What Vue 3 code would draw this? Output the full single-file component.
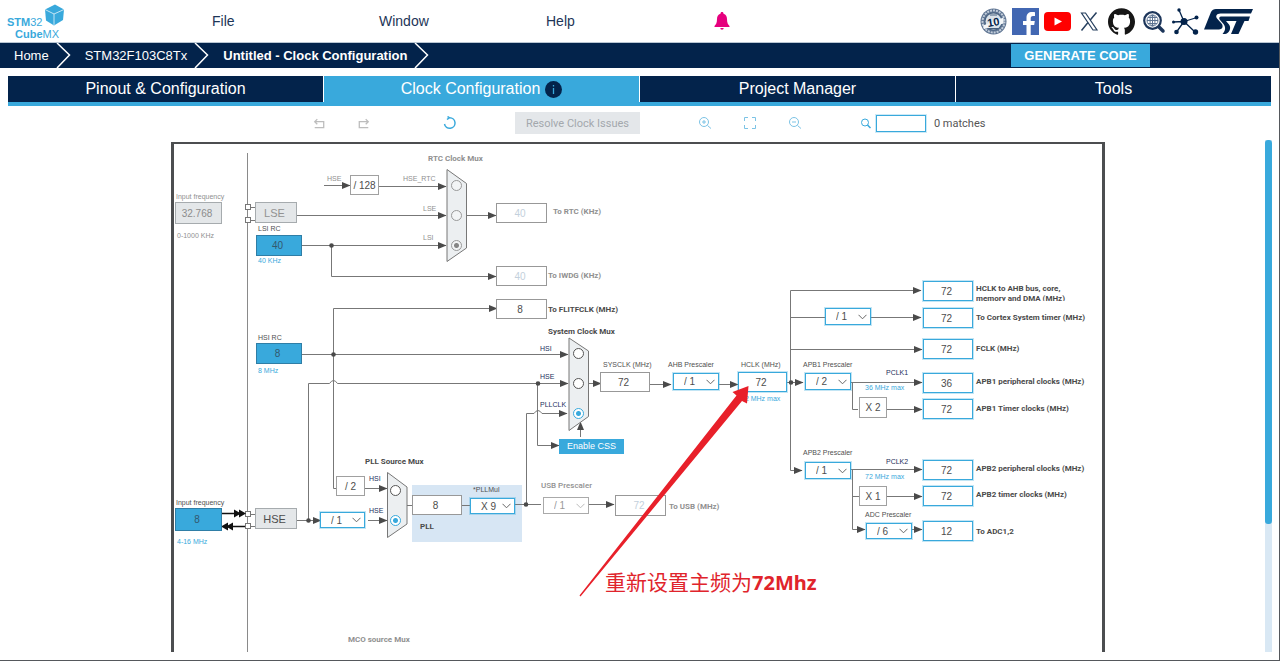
<script setup>
import { ref } from 'vue'

// Coordinates of the clock tree share one space; the canvas starts at this origin.
const origin = { x: 174, y: 144 }

const place = (n) => ({
  left: n.x - origin.x + 'px',
  top: n.y - origin.y + 'px',
  width: n.w ? n.w + 'px' : undefined,
  height: n.h ? n.h + 'px' : undefined,
})

const tabs = ref([
  { name: 'Pinout & Configuration', active: false },
  { name: 'Clock Configuration', active: true },
  { name: 'Project Manager', active: false },
  { name: 'Tools', active: false },
])

const fields = ref([
  { id: 'lse-in', label: 'LSE input frequency', value: '32.768', x: 175, y: 202, w: 47, h: 22, kind: 'off' },
  { id: 'lsi', label: 'LSI RC', value: '40', x: 256, y: 235, w: 46, h: 21, kind: 'source' },
  { id: 'hsi', label: 'HSI RC', value: '8', x: 256, y: 343, w: 46, h: 21, kind: 'source' },
  { id: 'hse-in', label: 'HSE input frequency', value: '8', x: 175, y: 508, w: 47, h: 23, kind: 'source' },
  { id: 'rtc', label: 'To RTC (KHz)', value: '40', x: 496, y: 203, w: 51, h: 20, kind: 'faint' },
  { id: 'iwdg', label: 'To IWDG (KHz)', value: '40', x: 496, y: 266, w: 51, h: 20, kind: 'faint' },
  { id: 'flitf', label: 'To FLITFCLK (MHz)', value: '8', x: 496, y: 299, w: 51, h: 20, kind: 'plain' },
  { id: 'sysclk', label: 'SYSCLK (MHz)', value: '72', x: 600, y: 372, w: 50, h: 20, kind: 'plain' },
  { id: 'hclk', label: 'HCLK (MHz)', value: '72', x: 738, y: 372, w: 49, h: 20, kind: 'live' },
  { id: 'usb', label: 'To USB (MHz)', value: '72', x: 615, y: 495, w: 51, h: 21, kind: 'faint' },
  { id: 'ahb', label: 'HCLK to AHB bus', value: '72', x: 923, y: 281, w: 50, h: 20, kind: 'live' },
  { id: 'cortex', label: 'To Cortex System timer', value: '72', x: 923, y: 308, w: 50, h: 20, kind: 'live' },
  { id: 'fclk', label: 'FCLK', value: '72', x: 923, y: 339, w: 50, h: 20, kind: 'live' },
  { id: 'apb1p', label: 'APB1 peripheral clocks', value: '36', x: 923, y: 373, w: 50, h: 20, kind: 'live' },
  { id: 'apb1t', label: 'APB1 Timer clocks', value: '72', x: 923, y: 399, w: 50, h: 20, kind: 'live' },
  { id: 'apb2p', label: 'APB2 peripheral clocks', value: '72', x: 923, y: 460, w: 50, h: 20, kind: 'live' },
  { id: 'apb2t', label: 'APB2 timer clocks', value: '72', x: 923, y: 486, w: 50, h: 20, kind: 'live' },
  { id: 'adc', label: 'To ADC1,2', value: '12', x: 923, y: 521, w: 50, h: 20, kind: 'live' },
])

const pllField = ref('8')

const blocks = [
  { text: 'LSE', x: 255, y: 202, w: 42, h: 21, kind: 'osc dim' },
  { text: 'HSE', x: 255, y: 508, w: 42, h: 21, kind: 'osc' },
  { text: '/ 128', x: 350, y: 175, w: 29, h: 20, kind: '' },
  { text: '/ 2', x: 336, y: 476, w: 29, h: 20, kind: '' },
  { text: 'X 2', x: 859, y: 397, w: 28, h: 21, kind: '' },
  { text: 'X 1', x: 859, y: 486, w: 28, h: 20, kind: '' },
]

const selects = ref([
  { id: 'hse-div', label: 'HSE divider', value: '/ 1', options: ['/ 1', '/ 2'], x: 320, y: 512, w: 45, h: 16 },
  { id: 'pll-mul', label: 'PLLMul', value: 'X 9', options: ['X 8', 'X 9'], x: 470, y: 498, w: 45, h: 16 },
  { id: 'usb-div', label: 'USB Prescaler', value: '/ 1', options: ['/ 1', '/ 1.5'], x: 543, y: 497, w: 46, h: 17, off: true },
  { id: 'ahb-div', label: 'AHB Prescaler', value: '/ 1', options: ['/ 1', '/ 2'], x: 673, y: 373, w: 46, h: 17 },
  { id: 'ctx-div', label: 'Cortex prescaler', value: '/ 1', options: ['/ 1', '/ 8'], x: 825, y: 308, w: 46, h: 17 },
  { id: 'apb1-div', label: 'APB1 Prescaler', value: '/ 2', options: ['/ 1', '/ 2'], x: 805, y: 373, w: 46, h: 17 },
  { id: 'apb2-div', label: 'APB2 Prescaler', value: '/ 1', options: ['/ 1', '/ 2'], x: 805, y: 462, w: 46, h: 17 },
  { id: 'adc-div', label: 'ADC Prescaler', value: '/ 6', options: ['/ 2', '/ 6'], x: 866, y: 523, w: 46, h: 16 },
])

const rtcMux = ref('LSI')
const sysMux = ref('PLLCLK')
const pllMux = ref('HSE')

const rtcRadios = [
  { value: 'HSE_RTC', x: 451, y: 180 },
  { value: 'LSE', x: 451, y: 210 },
  { value: 'LSI', x: 451, y: 240 },
]
const sysRadios = [
  { value: 'HSI', x: 573, y: 348 },
  { value: 'HSE', x: 573, y: 378 },
  { value: 'PLLCLK', x: 573, y: 408 },
]
const pllRadios = [
  { value: 'HSI', x: 390, y: 485 },
  { value: 'HSE', x: 390, y: 515 },
]

const labels = [
  { text: 'RTC Clock Mux', x: 428, y: 154, kind: 'bold dim' },
  { text: 'HSE', x: 327, y: 174, kind: 'dim' },
  { text: 'HSE_RTC', x: 403, y: 174, kind: 'dim' },
  { text: 'LSE', x: 423, y: 204, kind: 'dim' },
  { text: 'LSI', x: 423, y: 233, kind: 'dim' },
  { text: 'To RTC (KHz)', x: 553, y: 207, kind: 'bold dim' },
  { text: 'To IWDG (KHz)', x: 548, y: 271, kind: 'bold dim' },
  { text: 'To FLITFCLK (MHz)', x: 548, y: 305, kind: 'bold' },
  { text: 'Input frequency', x: 176, y: 192, kind: 'dim' },
  { text: '0-1000 KHz', x: 177, y: 231, kind: 'dim' },
  { text: 'LSI RC', x: 258, y: 224, kind: '' },
  { text: '40 KHz', x: 258, y: 256, kind: 'blue' },
  { text: 'HSI RC', x: 258, y: 333, kind: '' },
  { text: '8 MHz', x: 258, y: 366, kind: 'blue' },
  { text: 'System Clock Mux', x: 548, y: 327, kind: 'bold' },
  { text: 'HSI', x: 540, y: 344, kind: 'navy' },
  { text: 'HSE', x: 540, y: 372, kind: 'navy' },
  { text: 'PLLCLK', x: 540, y: 400, kind: 'navy' },
  { text: 'SYSCLK (MHz)', x: 603, y: 360, kind: '' },
  { text: 'AHB Prescaler', x: 668, y: 360, kind: '' },
  { text: 'HCLK (MHz)', x: 741, y: 360, kind: '' },
  { text: '72 MHz max', x: 741, y: 394, kind: 'blue' },
  { text: 'APB1 Prescaler', x: 803, y: 360, kind: '' },
  { text: 'PCLK1', x: 886, y: 368, kind: 'navy' },
  { text: '36 MHz max', x: 865, y: 383, kind: 'blue' },
  { text: 'APB2 Prescaler', x: 803, y: 448, kind: '' },
  { text: 'PCLK2', x: 886, y: 457, kind: 'navy' },
  { text: '72 MHz max', x: 865, y: 472, kind: 'blue' },
  { text: 'ADC Prescaler', x: 865, y: 510, kind: '' },
  { text: 'HCLK to AHB bus, core, memory and DMA (MHz)', x: 976, y: 284, w: 96, h: 17, kind: 'bold wrap' },
  { text: 'To Cortex System timer (MHz)', x: 976, y: 313, kind: 'bold' },
  { text: 'FCLK (MHz)', x: 976, y: 344, kind: 'bold' },
  { text: 'APB1 peripheral clocks (MHz)', x: 976, y: 377, kind: 'bold' },
  { text: 'APB1 Timer clocks (MHz)', x: 976, y: 404, kind: 'bold' },
  { text: 'APB2 peripheral clocks (MHz)', x: 976, y: 464, kind: 'bold' },
  { text: 'APB2 timer clocks (MHz)', x: 976, y: 490, kind: 'bold' },
  { text: 'To ADC1,2', x: 976, y: 527, kind: 'bold' },
  { text: 'PLL Source Mux', x: 365, y: 457, kind: 'bold' },
  { text: 'HSI', x: 369, y: 474, kind: 'navy' },
  { text: 'HSE', x: 369, y: 506, kind: 'navy' },
  { text: 'Input frequency', x: 176, y: 498, kind: '' },
  { text: '4-16 MHz', x: 177, y: 537, kind: 'blue' },
  { text: '*PLLMul', x: 473, y: 485, kind: '' },
  { text: 'PLL', x: 420, y: 522, kind: 'bold' },
  { text: 'USB Prescaler', x: 541, y: 481, kind: 'bold dim thin' },
  { text: 'To USB (MHz)', x: 669, y: 502, kind: 'bold dim' },
  { text: 'MCO source Mux', x: 348, y: 635, kind: 'bold dim' },
]

// Wires that end in an arrowhead.
const arrows = [
  'M324 185.5H350', 'M379 186.5H446', 'M297 215.5H446', 'M302 245.5H446',
  'M331.5 245.5V276.5H496', 'M333.5 354.5V308.5H497', 'M302 354.5H568',
  'M308.5 520V383.5H329.5Q333.5 377.5 337.5 383.5H568',
  'M537.5 383.5V445.5H559', 'M526.5 504V413.5H534Q538 407.5 542 413.5H567',
  'M467 215.5H496', 'M589 383.5H601', 'M650 384.5H671', 'M719 384.5H738',
  'M787 382.5H803', 'M790.5 382.5V290.5H921', 'M790.5 382.5V470.5H802',
  'M871 317.5H921', 'M790.5 349.5H922', 'M851 382.5H922', 'M887 409.5H922',
  'M851 469.5H922', 'M887 496.5H922', 'M852.5 470V529.5H865', 'M912 529.5H922',
  'M365 488.5H387', 'M297 520.5H321', 'M368 520.5H387', 'M589 504.5H614',
  'M580.5 437V422',
]
// Wires without an arrowhead.
const wires = [
  'M333.5 354V488.5H336', 'M790.5 317.5H825', 'M852.5 382V409.5H858', 'M852.5 496.5H859',
  'M407 505.5H412', 'M462 505.5H470', 'M515 504.5H541',
  'M250 207.5H255', 'M250 220.5H255', 'M250 514.5H255', 'M250 526.5H255',
]
const dots = [
  [331.5, 245.5], [333.5, 354.5], [538, 383.5], [526, 504.5], [308.5, 520.5], [791, 382.5],
]
const pins = [207, 220, 514, 526]
</script>

<template>
  <div class="page">
    <header class="top">
      <svg class="logo" viewBox="0 0 70 42" role="img" aria-label="STM32 CubeMX">
        <text x="7" y="26" class="logo-text"><tspan class="heavy">STM</tspan>32</text>
        <text x="15" y="38" class="logo-text"><tspan class="heavy">Cube</tspan>MX</text>
        <path d="M45 9.500L55 4.500L64 9.500L63 20L54 25.500L46 20.500Z" fill="#39a9dc" />
        <path d="M45 9.500L54 14L64 9.500M54 14V25.500" fill="none" stroke="#c4e5f5" stroke-width="1" />
      </svg>
      <nav class="menu" aria-label="Main">
        <button type="button">File</button>
        <button type="button">Window</button>
        <button type="button">Help</button>
        <button type="button" aria-label="Notifications">
          <svg width="18" height="20" viewBox="0 0 18 20" fill="#e6007e">
            <path d="M9 1C10 1 10.500 1.700 10.500 2.700C13 3.500 14 5.500 14 8C14 12 15 13.500 16.500 15V16H1.500V15C3 13.500 4 12 4 8C4 5.500 5 3.500 7.500 2.700C7.500 1.700 8 1 9 1Z" />
            <path d="M7.300 17H10.700A1.700 1.700 0 0 1 7.300 17Z" />
          </svg>
        </button>
      </nav>
      <div class="links">
        <a href="#" aria-label="Ten years">
          <svg viewBox="0 0 27 27">
            <circle cx="13.500" cy="13.500" r="13" fill="#5d7391" />
            <circle cx="13.500" cy="13.500" r="11" fill="none" stroke="#c3cedb" stroke-width="2" stroke-dasharray="2 1" />
            <circle cx="13.500" cy="13.500" r="9" fill="#46607f" />
            <circle cx="13.500" cy="13.500" r="8" fill="#dbe3ea" />
            <path d="M3 17.500L23.500 9.500V15.500L4 21Z" fill="#f3f6f8" />
            <text x="7" y="18" class="badge-text" transform="rotate(-10 13 13)">10</text>
            <path d="M9 20.500H18M10 7H17" stroke="#46607f" stroke-width="1" />
          </svg>
        </a>
        <a href="#" aria-label="Facebook">
          <svg viewBox="0 0 27 27">
            <rect width="27" height="27" fill="#4267b2" />
            <path d="M14.500 27V17H11V13H14.500V9.800C14.500 6 16.700 4 20 4C21.500 4 22.500 4.100 23 4.200V8H21C19.200 8 18.700 9 18.700 10.300V13H22.800L22.200 17H18.700V27Z" fill="#fff" />
          </svg>
        </a>
        <a href="#" aria-label="YouTube">
          <svg viewBox="0 0 27 27">
            <rect y="4" width="27" height="19" rx="4" fill="#f00" />
            <path d="M10.500 9.500L18 13.500L10.500 17.500Z" fill="#fff" />
          </svg>
        </a>
        <a href="#" aria-label="X">
          <svg viewBox="0 0 27 27" fill="none" stroke="#27405f" stroke-width="1.200">
            <path d="M5.500 5H9.500L21 22H17Z" />
            <path d="M20.500 4.500L14 12.200M12 14.500L5.500 22.500" stroke-width="1.500" />
          </svg>
        </a>
        <a href="#" aria-label="GitHub">
          <svg viewBox="0 0 24 24" fill="#161616">
            <path d="M12 .297c-6.630 0-12 5.373-12 12 0 5.303 3.438 9.800 8.205 11.385.6.113.82-.258.82-.577 0-.285-.01-1.040-.015-2.040-3.338.724-4.042-1.610-4.042-1.610C4.422 18.070 3.633 17.700 3.633 17.700c-1.087-.744.084-.729.084-.729 1.205.084 1.838 1.236 1.838 1.236 1.070 1.835 2.809 1.305 3.495.998.108-.776.417-1.305.76-1.605-2.665-.3-5.466-1.332-5.466-5.930 0-1.310.465-2.380 1.235-3.220-.135-.303-.54-1.523.105-3.176 0 0 1.005-.322 3.300 1.230.96-.267 1.980-.399 3-.405 1.020.006 2.040.138 3 .405 2.280-1.552 3.285-1.230 3.285-1.230.645 1.653.24 2.873.12 3.176.765.84 1.230 1.910 1.230 3.220 0 4.610-2.805 5.625-5.475 5.920.42.36.81 1.096.81 2.220 0 1.606-.015 2.896-.015 3.286 0 .315.21.69.825.57C20.565 22.092 24 17.592 24 12.297c0-6.627-5.373-12-12-12" />
          </svg>
        </a>
        <a href="#" aria-label="Search the web">
          <svg viewBox="0 0 27 27" fill="none" stroke="#1c355a">
            <path d="M18 18L23 23" stroke-width="3.500" stroke-linecap="round" />
            <circle cx="12.500" cy="12.500" r="8.300" stroke-width="2.200" fill="#fff" />
            <g stroke="#5d7391" stroke-width="1">
              <circle cx="12.500" cy="12.500" r="5.500" />
              <ellipse cx="12.500" cy="12.500" rx="2.500" ry="5.500" />
              <path d="M7 12.500H18M8 9.500H17M8 15.500H17M12.500 7V18" />
            </g>
          </svg>
        </a>
        <a href="#" aria-label="Community">
          <svg viewBox="0 0 27 27" fill="#03234b" stroke="#03234b">
            <path d="M12 13.500L7 2M12 13.500L25 9.500M12 13.500L1 14M12 13.500L4.500 24M12 13.500L23 24" stroke-width="1.300" />
            <g stroke="none">
              <circle cx="12" cy="13.500" r="3.500" />
              <circle cx="7" cy="2" r="1.700" />
              <circle cx="24.500" cy="9.500" r="2" />
              <circle cx="1.500" cy="14" r="1.500" />
              <circle cx="4.500" cy="24" r="2.300" />
              <circle cx="23.500" cy="24" r="2.700" />
            </g>
          </svg>
        </a>
        <a href="#" class="st" aria-label="ST">
          <svg viewBox="0 0 49 27" fill="#03234b">
            <path d="M0 21.500L7 4Q8.500 1 12 1H49L47 5.500H16.500C12.500 5.500 11 8.500 13.500 11L17.500 15.500C20 18.500 18 21.500 15 21.500Z" />
            <path d="M17.500 8.500H46L44.500 13H40.500L34.500 26H27L32.500 13H22L25 16.500C28 20.500 24.500 26 21 26H18.500C21.500 23 22 19 19.500 16L16 12C14.500 10 15.500 8.500 17.500 8.500Z" />
          </svg>
        </a>
      </div>
    </header>

    <div class="crumbs">
      <a href="#">Home</a>
      <svg class="sep" viewBox="0 0 15 25"><path d="M1 0L13.500 12L1 25" /></svg>
      <a href="#">STM32F103C8Tx</a>
      <svg class="sep" viewBox="0 0 15 25"><path d="M1 0L13.500 12L1 25" /></svg>
      <a href="#" class="current">Untitled - Clock Configuration</a>
      <svg class="sep" viewBox="0 0 15 25"><path d="M1 0L13.500 12L1 25" /></svg>
      <button type="button" class="generate">GENERATE CODE</button>
    </div>

    <nav class="tabs" aria-label="Project">
      <button v-for="t in tabs" :key="t.name" type="button" :class="{ active: t.active }">
        {{ t.name }}
        <svg v-if="t.active" width="17" height="17" viewBox="0 0 17 17">
          <circle cx="8.500" cy="8.500" r="8.500" fill="#03234b" />
          <path d="M8.500 7V13M8.500 4V5.500" stroke="#39a9dc" stroke-width="1.300" />
        </svg>
      </button>
    </nav>

    <div class="toolbar">
      <div class="tools">
        <button type="button" aria-label="Undo" disabled>
          <svg viewBox="0 0 14 14" stroke="#bdbdbd"><path d="M2 12.500H12.500V5.500H2.500M5 2.500L2 5.500L5 8.500" stroke-width="1.500" /></svg>
        </button>
        <button type="button" aria-label="Redo" disabled>
          <svg viewBox="0 0 14 14" stroke="#bdbdbd"><path d="M12 12.500H1.500V5.500H11.500M9 2.500L12 5.500L9 8.500" stroke-width="1.500" /></svg>
        </button>
      </div>
      <button type="button" class="reset" aria-label="Reset">
        <svg viewBox="0 0 14 14" stroke="#39a9dc"><path d="M6.500 1.700A5.300 5.300 0 1 1 1.500 8M4 3.500L6.500 1.700L4.500 .5" stroke-width="1.500" /></svg>
      </button>
      <button type="button" class="resolve" disabled>Resolve Clock Issues</button>
      <div class="tools">
        <button type="button" aria-label="Zoom in">
          <svg viewBox="0 0 14 14" stroke="#7cc3e5"><circle cx="6" cy="6" r="4.500" /><path d="M9.500 9.500L13 12.500M4 6H8M6 4V8" /></svg>
        </button>
        <button type="button" aria-label="Fit to window">
          <svg viewBox="0 0 14 14" stroke="#7cc3e5"><path d="M1.500 5V1.500H5M9 1.500H12.500V5M12.500 9V12.500H9M5 12.500H1.500V9" /></svg>
        </button>
        <button type="button" aria-label="Zoom out">
          <svg viewBox="0 0 14 14" stroke="#7cc3e5"><circle cx="6" cy="6" r="4.500" /><path d="M9.500 9.500L13 12.500M4 6H8" /></svg>
        </button>
      </div>
      <label class="search">
        <svg width="11" height="11" viewBox="0 0 11 11" stroke="#39a9dc" fill="none"><circle cx="5" cy="4.500" r="3.500" /><path d="M7.500 7L10.500 10" stroke-width="1.500" /></svg>
        <input type="text" aria-label="Search" />
        <span>0 matches</span>
      </label>
    </div>

    <main class="workspace">
      <div class="scroll-area">
        <div class="canvas">
          <div class="pll" :style="place({ x: 412, y: 485, w: 110, h: 57 })"></div>

          <svg class="wiring" viewBox="174 144 928 508" aria-hidden="true">
            <defs>
              <marker id="head" markerUnits="userSpaceOnUse" markerWidth="9" markerHeight="8" refX="8" refY="4" orient="auto">
                <path d="M0 .5L8.500 4L0 7.500Z" fill="#4a4a4a" />
              </marker>
            </defs>
            <path d="M247.500 153V652" class="rail" />
            <path v-for="d in arrows" :key="d" :d="d" class="wire" marker-end="url(#head)" />
            <path v-for="d in wires" :key="d" :d="d" class="wire" />
            <circle v-for="d in dots" :key="d.join()" :cx="d[0]" :cy="d[1]" r="2.300" fill="#4a4a4a" />
            <rect v-for="y in pins" :key="y" x="245.500" :y="y - 2.500" width="5" height="5" class="pin" />
            <path d="M222 513.500H242M226 526.500H245" stroke="#111" stroke-width="1.500" />
            <path d="M234 509.500L241 513.500L234 517.500ZM239 509.500L246 513.500L239 517.500ZM228 522.500L221 526.500L228 530.500ZM233 522.500L226 526.500L233 530.500Z" fill="#111" />
            <path d="M447 169.500L466.500 183.500V248L447 261.500Z" class="mux" />
            <path d="M569 338L588.500 351V416.500L569 430.500Z" class="mux" />
            <path d="M387.500 472.500L407 487V524L387.500 537.500Z" class="mux" />
          </svg>

          <div v-for="b in blocks" :key="b.text + b.y" class="block" :class="b.kind" :style="place(b)">{{ b.text }}</div>

          <input v-for="f in fields" :key="f.id" v-model="f.value" type="text" class="field" :class="f.kind" :aria-label="f.label" :style="place(f)" />
          <input v-model="pllField" type="text" class="field plain" aria-label="PLL input" :style="place({ x: 412, y: 495, w: 50, h: 20 })" />

          <div v-for="s in selects" :key="s.id" class="select" :class="{ off: s.off }" :style="place(s)">
            <select v-model="s.value" :aria-label="s.label" :disabled="s.off">
              <option v-for="o in s.options" :key="o">{{ o }}</option>
            </select>
            <svg width="9" height="6" viewBox="0 0 9 6"><path d="M.5 .8L4.500 4.800L8.500 .8" /></svg>
          </div>

          <input v-for="r in rtcRadios" :key="r.value" v-model="rtcMux" type="radio" name="rtc" class="dim" :value="r.value" :aria-label="'RTC source ' + r.value" :style="place(r)" />
          <input v-for="r in sysRadios" :key="r.value" v-model="sysMux" type="radio" name="sys" :value="r.value" :aria-label="'System clock source ' + r.value" :style="place(r)" />
          <input v-for="r in pllRadios" :key="r.value" v-model="pllMux" type="radio" name="pll" :value="r.value" :aria-label="'PLL source ' + r.value" :style="place(r)" />

          <button type="button" class="css-button" :style="place({ x: 559, y: 439, w: 65, h: 15 })">Enable CSS</button>

          <span v-for="l in labels" :key="l.text + l.x + l.y" class="label" :class="l.kind" :style="place(l)">{{ l.text }}</span>

          <svg class="wiring over" viewBox="174 144 928 508" aria-hidden="true">
            <path d="M748.500 386L732.500 392L736.500 395.500L579.500 595.500L580.500 596.500L742 401L747 403.500Z" fill="#e8202a" />
          </svg>
          <p class="note" :style="place({ x: 605, y: 569 })">重新设置主频为<b>72Mhz</b></p>
        </div>
      </div>
      <div class="scrollbar"><div class="thumb"></div></div>
    </main>
  </div>
</template>

<style>
body {
  margin: 0;
  background: #fff;
}
</style>

<style scoped>
.page {
  box-sizing: border-box;
  min-height: 100vh;
  display: flex;
  flex-direction: column;
  border-right: 1px solid #55585c;
  border-bottom: 1px solid #55585c;
  padding-bottom: 8px;
  overflow: hidden;
  font-family: "Liberation Sans", Arial, sans-serif;
  color: #4d4d4d;
}
button,
input,
select {
  font-family: inherit;
  margin: 0;
  padding: 0;
  box-sizing: border-box;
}
button {
  border: 0;
  background: none;
  color: inherit;
}
a {
  color: inherit;
  text-decoration: none;
}

.top {
  display: flex;
  align-items: center;
  height: 42px;
  border-bottom: 1px solid #b9c6d3;
}
.logo {
  width: 70px;
  height: 42px;
  flex: none;
}
.logo-text {
  font-size: 11px;
  fill: #39a9dc;
}
.heavy {
  font-weight: 700;
}
.menu {
  flex: 1;
  display: grid;
  grid-template-columns: repeat(4, 167px);
  justify-items: start;
  align-items: center;
  padding-left: 142px;
}
.menu button {
  font-size: 14px;
  line-height: 20px;
  color: #1d3557;
}
.menu svg {
  display: block;
}
.links {
  display: flex;
  gap: 5px;
  margin-right: 26px;
}
.links a {
  width: 27px;
  height: 27px;
}
.links .st {
  width: 49px;
}
.links svg {
  display: block;
  width: 100%;
  height: 100%;
}
.badge-text {
  font-size: 11px;
  font-weight: 700;
  fill: #03234b;
}

.crumbs {
  display: flex;
  align-items: center;
  height: 25px;
  padding: 0 129px 0 14px;
  background: #03234b;
  color: #fff;
  font-size: 13px;
  white-space: nowrap;
}
.sep {
  width: 15px;
  height: 25px;
  margin: 0 14px 0 7px;
  fill: none;
  stroke: #fff;
  stroke-width: 1.500;
}
.current {
  font-weight: 700;
}
.generate {
  margin-left: auto;
  height: 23px;
  width: 139px;
  background: #39a9dc;
  color: #fff;
  font-size: 13px;
  font-weight: 700;
}

.tabs {
  display: grid;
  grid-template-columns: repeat(4, 1fr);
  gap: 1px;
  margin: 8px 8px 0;
  border-bottom: 4px solid #39a9dc;
}
.tabs button {
  display: flex;
  align-items: center;
  justify-content: center;
  gap: 5px;
  height: 26px;
  background: #03234b;
  color: #fff;
  font-size: 16px;
  line-height: 26px;
}
.tabs .active {
  background: #39a9dc;
}

.toolbar {
  display: flex;
  align-items: center;
  height: 34px;
  padding-left: 24%;
}
.tools {
  display: flex;
  gap: 21px;
}
.toolbar button:not(.resolve) {
  width: 24px;
  height: 24px;
  display: grid;
  place-items: center;
}
.toolbar button svg {
  width: 14px;
  height: 14px;
  fill: none;
}
.toolbar button:disabled svg {
  width: 12px;
  height: 12px;
}
.reset {
  margin: 0 53px 0 62px;
}
.resolve {
  width: 125px;
  height: 22px;
  margin-right: 53px;
  background: #e4e7ea;
  color: #a3a8ad;
  font-family: Roboto, sans-serif;
  font-size: 11px;
}
.search {
  display: flex;
  align-items: center;
  margin-left: 53px;
  font-family: Roboto, sans-serif;
  font-size: 11px;
  color: #555;
}
.search input {
  width: 50px;
  height: 17px;
  margin: 0 8px 0 5px;
  border: 1px solid #39a9dc;
  box-shadow: 0 0 0 1px rgba(57, 169, 220, 0.25);
}

.workspace {
  flex: 1;
  display: flex;
  padding: 0 7px 0 11px;
}
.scroll-area {
  flex: 1;
  display: flex;
  justify-content: center;
  padding-top: 2px;
}
.scrollbar {
  width: 7px;
  background: #d9e8f4;
}
.thumb {
  height: 75%;
  border-radius: 3px;
  background: #39a9dc;
}

.canvas {
  position: relative;
  width: 928px;
  height: 508px;
  flex: none;
  border: 3px solid #4c4e50;
  border-top-width: 2px;
  border-bottom: 0;
}
.wiring {
  position: absolute;
  inset: 0;
  width: 928px;
  height: 508px;
}
.over {
  pointer-events: none;
}
.rail {
  stroke: #8a8a8a;
}
.wire {
  fill: none;
  stroke: #777;
}
.pin {
  fill: #fff;
  stroke: #777;
}
.mux {
  fill: #eceff1;
  stroke: #777;
}
.pll {
  position: absolute;
  background: #d7e6f4;
}

.block {
  position: absolute;
  box-sizing: border-box;
  display: flex;
  align-items: center;
  justify-content: center;
  border: 1px solid #a0a0a0;
  background: #fff;
  color: #4d4d4d;
  font-size: 10px;
}
.osc {
  background: #e4e7e9;
  border-color: #a6abae;
  font-size: 11px;
  padding-right: 3px;
}
.block.dim {
  color: #929292;
}

.field {
  position: absolute;
  border: 1px solid #989898;
  border-radius: 0;
  background: #fff;
  color: #4d4d4d;
  font-size: 10px;
  text-align: center;
  padding-right: 3px;
}
.field.live {
  border-color: #39a9dc;
  box-shadow: 0 0 0 1px rgba(57, 169, 220, 0.3);
}
.field.source {
  background: #39a9dc;
  border-color: #2f7ea6;
  color: #33586e;
}
.field.off {
  background: #e4e7e9;
  border-color: #a6abae;
  color: #8c8c8c;
}
.field.faint {
  color: #c3d0dc;
}

.select {
  position: absolute;
  box-sizing: border-box;
  display: flex;
  align-items: center;
  border: 1px solid #39a9dc;
  box-shadow: 0 0 0 1px rgba(57, 169, 220, 0.3);
  background: #fff;
}
.select select {
  appearance: none;
  flex: 1;
  min-width: 0;
  height: 100%;
  border: 0;
  background: none;
  color: #4d4d4d;
  font-size: 10px;
  line-height: 14px;
  padding: 1px 0 0 10px;
}
.select svg {
  margin-right: 3px;
  fill: none;
  stroke: #666;
  pointer-events: none;
}
.select.off {
  border-color: #aaa;
  box-shadow: none;
}
.select.off select {
  color: #999;
  opacity: 1;
}
.select.off svg {
  stroke: #bbb;
}

input[type="radio"] {
  position: absolute;
  appearance: none;
  width: 11px;
  height: 11px;
  border: 1px solid #555;
  border-radius: 50%;
  background: #fff;
}
input[type="radio"]:checked {
  border-color: #39a9dc;
  background: radial-gradient(circle, #39a9dc 0 2px, #fff 3px);
}
input[type="radio"].dim {
  border-color: #999;
  background: #f2f4f5;
}
input[type="radio"].dim:checked {
  background: radial-gradient(circle, #858585 0 2px, #f2f4f5 3px);
}

.css-button {
  position: absolute;
  background: #39a9dc;
  color: #fff;
  font-size: 9px;
  line-height: 15px;
}

.label {
  position: absolute;
  font-size: 7px;
  line-height: 10px;
  white-space: nowrap;
  color: #505050;
}
.label.bold {
  font-family: Roboto, "Liberation Sans", sans-serif;
  font-size: 8px;
  font-weight: 700;
  color: #4a4a4a;
}
.label.dim,
.label.bold.dim {
  color: #909090;
}
.label.thin {
  font-weight: 500;
}
.label.navy {
  color: #1d2f5c;
}
.label.blue {
  color: #39a9dc;
}
.label.wrap {
  white-space: normal;
  overflow: hidden;
}

.note {
  position: absolute;
  margin: 0;
  white-space: nowrap;
  font-family: "Noto Sans CJK SC", sans-serif;
  font-size: 21px;
  line-height: 24px;
  color: #e0242c;
}
.note b {
  font-family: "Noto Sans", "Noto Sans CJK SC", sans-serif;
  font-size: 20px;
}
</style>
